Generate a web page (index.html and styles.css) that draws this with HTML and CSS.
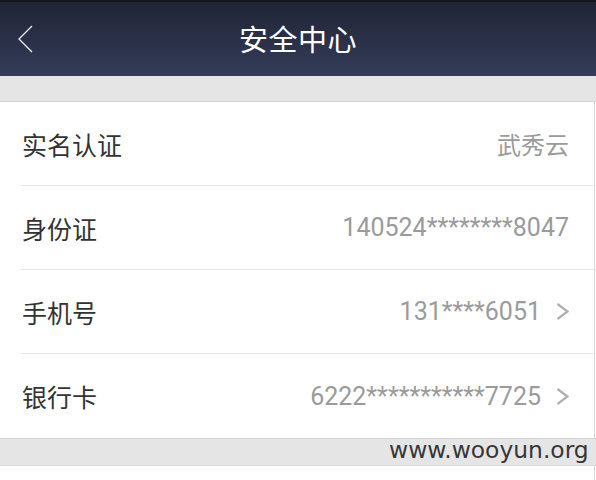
FILE: index.html
```html
<!DOCTYPE html>
<html lang="zh-CN">
<head>
<meta charset="utf-8">
<link rel="stylesheet" href="styles.css">
</head>
<body>
<div class="page">
  <header class="topbar">
    <svg class="back" width="20" height="30" viewBox="0 0 20 30"><polyline points="14,1 1,14 14,27" fill="none" stroke="#e6e8ee" stroke-width="1.4"/></svg>
    <h1 class="title">安全中心</h1>
  </header>
  <div class="gap-top"></div>
  <ul class="list">
    <li class="row"><span class="label">实名认证</span><span class="value cjk">武秀云</span></li>
    <li class="row"><span class="label">身份证</span><span class="value">140524********8047</span></li>
    <li class="row"><span class="label">手机号</span><span class="value">131****6051</span><svg class="chev" width="13" height="17" viewBox="0 0 13 17"><polyline points="1.5,1 11.5,8.5 1.5,16" fill="none" stroke="#b0b0b0" stroke-width="2.2"/></svg></li>
    <li class="row last"><span class="label">银行卡</span><span class="value">6222***********7725</span><svg class="chev" width="13" height="17" viewBox="0 0 13 17"><polyline points="1.5,1 11.5,8.5 1.5,16" fill="none" stroke="#b0b0b0" stroke-width="2.2"/></svg></li>
  </ul>
  <div class="gap-bottom"></div>
  <div class="tail"></div>
  <div class="watermark">www.wooyun.org</div>
</div>
</body>
</html>
```

FILE: styles.css
```css
* { box-sizing: border-box; }
html, body { margin: 0; padding: 0; background: #fff; }
body { font-family: "Noto Sans CJK SC", "Noto Sans", sans-serif; }
.page { position: relative; width: 596px; height: 480px; overflow: hidden; }
.topbar {
  height: 76px;
  border-top: 2px solid #15171f;
  background: linear-gradient(#202434, #343c59);
  display: flex;
  align-items: center;
  justify-content: center;
  position: relative;
}
.back { position: absolute; left: 18px; top: 23px; }
.title {
  margin: 0;
  font-weight: normal;
  font-size: 29px;
  color: #fff;
  letter-spacing: 0.5px;
  line-height: 1;
  margin-top: -2px;
}
.gap-top { height: 26px; background: #e5e5e5; border-bottom: 1px solid #d3d3d3; }
.list {
  list-style: none; margin: 0; padding: 0 0 0 21px;
  background: #fff;
  border-right: 1px solid #d9d9d9;
  margin-right: 1px;
}
.row {
  height: 84px;
  display: flex;
  align-items: center;
  padding-right: 25px;
  border-bottom: 1px solid #e3e3e3;
}
.row.last { border-bottom: none; }
.label { font-size: 25px; color: #333; flex: 1; padding-left: 1px; }
.value { font-family: Roboto, "Noto Sans CJK SC", sans-serif; font-size: 25px; color: #9b9b9b; }
.value.cjk { font-family: "Noto Sans CJK SC", sans-serif; font-size: 24px; }
.chev { margin-left: 15px; margin-right: 0; }
.gap-bottom { height: 28px; background: #e5e5e5; border-top: 1px solid #d3d3d3; border-bottom: 1px solid #dcdcdc; }
.tail { height: 20px; background: #fff; border-right: 1px solid #d9d9d9; margin-right: 1px; }
.watermark {
  position: absolute;
  left: 389px;
  top: 436px;
  font-family: "DejaVu Sans", sans-serif;
  font-size: 23.4px;
  color: #363636;
}
```
